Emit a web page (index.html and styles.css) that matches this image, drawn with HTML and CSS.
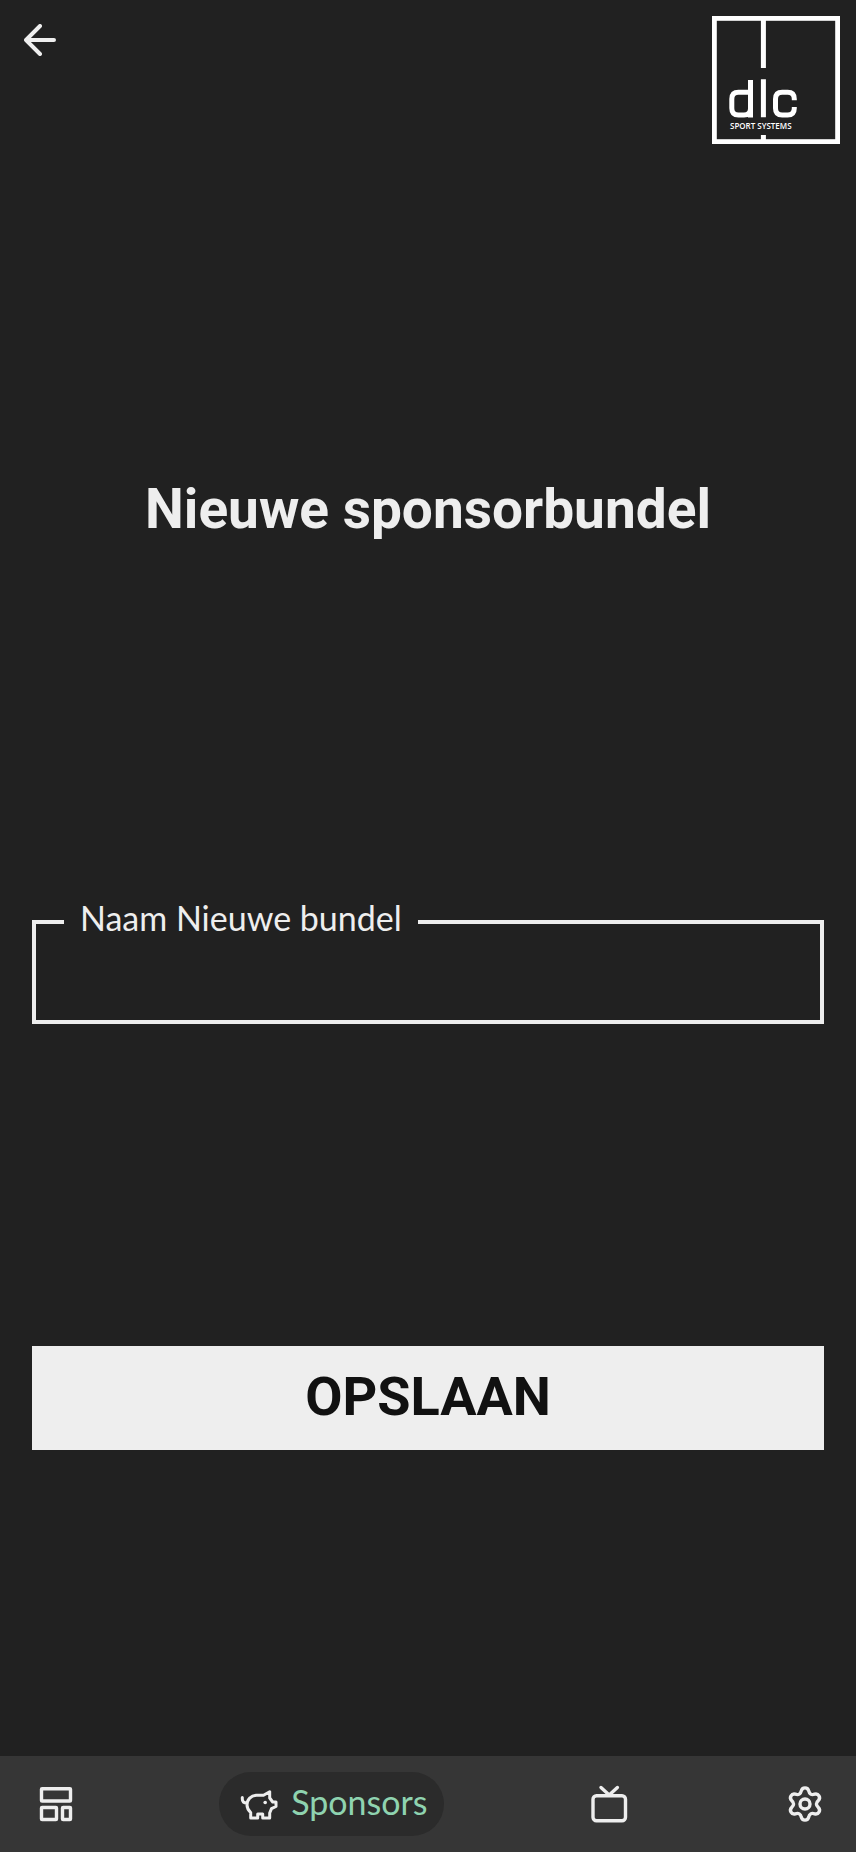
FILE: index.html
```html
<!DOCTYPE html>
<html lang="nl">
<head>
<meta charset="utf-8">
<meta name="viewport" content="width=device-width, initial-scale=1">
<title>Nieuwe sponsorbundel</title>
<link rel="stylesheet" href="styles.css">
</head>
<body>
<header class="topbar">
  <button class="back" type="button" aria-label="Terug">
    <svg width="32" height="32" viewBox="0 0 32 32"><path d="M30 16H2M16 2L2 16l14 14"/></svg>
  </button>
  <svg class="logo" width="128" height="128" viewBox="0 0 128 128" role="img" aria-label="dlc sport systems">
    <rect x="2.4" y="2.4" width="123.2" height="123.2" stroke-width="4.8"/>
    <path stroke-width="5" d="M51.4 2v50M51.4 63.3v38M51.4 119v7"/>
    <path stroke-width="5" d="M38.5 64v37.500M38.500 76.300H26.500Q19.800 76.300 19.800 83v9.200Q19.800 99 26.500 99H32Q38.500 99 38.500 92.500"/>
    <path stroke-width="5" d="M82.300 84.300V83Q82.300 76.300 75.600 76.300H70.200Q63.500 76.300 63.500 83v9.200Q63.500 99 70.200 99H75.600Q82.300 99 82.300 92.300V91"/>
    <text class="logo-text" x="18" y="113">SPORT SYSTEMS</text>
  </svg>
</header>
<main class="content">
  <h1 class="title">Nieuwe sponsorbundel</h1>
  <fieldset class="field">
    <legend class="field-legend"><label for="name">Naam Nieuwe bundel</label></legend>
    <input class="field-input" id="name" type="text">
  </fieldset>
  <button class="save" type="submit">OPSLAAN</button>
</main>
<nav class="tabs">
  <a class="tab" href="#" aria-label="Overzicht">
    <svg width="48" height="48" viewBox="0 0 48 48"><g stroke-width="3.400"><rect x="9.500" y="8.700" width="29" height="12.300" rx="0.600"/><rect x="9.500" y="27.500" width="15" height="12" rx="0.600"/><rect x="30.500" y="27.500" width="8" height="12" rx="0.600"/></g></svg>
  </a>
  <a class="tab tab-active" href="#" aria-current="page">
    <svg width="48" height="48" viewBox="0 0 48 48"><path stroke-width="3" d="M7.300 17.500v1.500q0 4 4.700 4M28.500 15.300l6.200-3.500v6.200l3 4H41v4.500l-4.500 2.200-1.800 4.300V38h-7v-4h-5v4h-7v-5.500C13 30 12 27.500 12 25c0-5.500 4-9.700 9.500-9.700z"/><circle class="solid" cx="30.200" cy="22.500" r="1.800"/></svg>
    <span>Sponsors</span>
  </a>
  <a class="tab" href="#" aria-label="Televisie">
    <svg width="48" height="48" viewBox="0 0 48 48"><g stroke-width="3.400"><rect x="10" y="15.800" width="32.500" height="25" rx="3.500"/><path d="M18 7.500l8.200 7.500 8.200-7.500"/></g></svg>
  </a>
  <a class="tab" href="#" aria-label="Instellingen">
    <svg width="38" height="48" viewBox="1 0 38 48"><g stroke-width="3.400"><circle cx="20" cy="24" r="5"/><path d="M16.300 10.800a3.800 3.800 0 0 1 7.400 0C24.300 14 26.500 15.300 29.600 14.200a3.800 3.800 0 0 1 3.700 6.400C30.800 22.700 30.800 25.300 33.300 27.400a3.800 3.800 0 0 1-3.700 6.400C26.500 32.700 24.300 34 23.700 37.200a3.800 3.800 0 0 1-7.400 0C15.700 34 13.500 32.700 10.400 33.800a3.800 3.800 0 0 1-3.700-6.400C9.200 25.300 9.200 22.700 6.700 20.600a3.800 3.800 0 0 1 3.700-6.400C13.500 15.300 15.700 14 16.300 10.800z"/></g></svg>
  </a>
</nav>
</body>
</html>
```
FILE: styles.css
```css
* { box-sizing: border-box; }

body {
  margin: 0;
  min-height: 100vh;
  display: flex;
  flex-direction: column;
  background: #212121;
  color: #eee;
  font-family: Lato, "Open Sans", sans-serif;
}

button { border: 0; cursor: pointer; }

svg {
  display: block;
  flex: none;
  fill: none;
  stroke: #eee;
  stroke-linecap: round;
  stroke-linejoin: round;
}

.topbar {
  display: flex;
  justify-content: space-between;
  align-items: flex-start;
  padding: 16px;
}

.back {
  padding: 8px;
  background: none;
}

.back svg { stroke-width: 4; }

.logo {
  stroke: #fff;
  stroke-linecap: butt;
  stroke-linejoin: miter;
}

.logo-text {
  fill: #fff;
  stroke: none;
  font-family: "Open Sans", sans-serif;
  font-size: 8px;
  font-weight: 600;
}

.content {
  flex: 1;
  display: flex;
  flex-direction: column;
  justify-content: space-evenly;
  padding: 0 32px;
}

.title {
  margin: 0;
  padding-bottom: 28px;
  font-family: Roboto, sans-serif;
  font-size: 55px;
  font-weight: 700;
  line-height: 86px;
  text-align: center;
}

.field {
  min-width: 0;
  margin: 16px 0;
  padding: 0 28px;
  border: 4px solid #eee;
}

.field-legend {
  padding: 0 16px 8px;
  font-size: 34px;
  line-height: 32px;
}

.field-input {
  display: block;
  width: 100%;
  height: 78px;
  padding: 0 16px;
  border: 0;
  outline: 0;
  background: none;
  color: inherit;
  font: inherit;
  font-size: 34px;
}

.save {
  height: 104px;
  padding: 0 0 4px;
  background: #eee;
  color: #111;
  font-family: Roboto, sans-serif;
  font-size: 54px;
  font-weight: 700;
}

.tabs {
  display: flex;
  justify-content: space-between;
  padding: 16px;
  background: #363636;
}

.tab {
  display: flex;
  align-items: center;
  gap: 8px;
  height: 64px;
  padding: 0 16px;
  border-radius: 32px;
  color: #8fd3b0;
  font-size: 34px;
  line-height: 40px;
  text-decoration: none;
}

.tab span { padding-bottom: 4px; }

.tab-active { background: #2b2b2b; }

.solid { fill: #eee; stroke: none; }
```
